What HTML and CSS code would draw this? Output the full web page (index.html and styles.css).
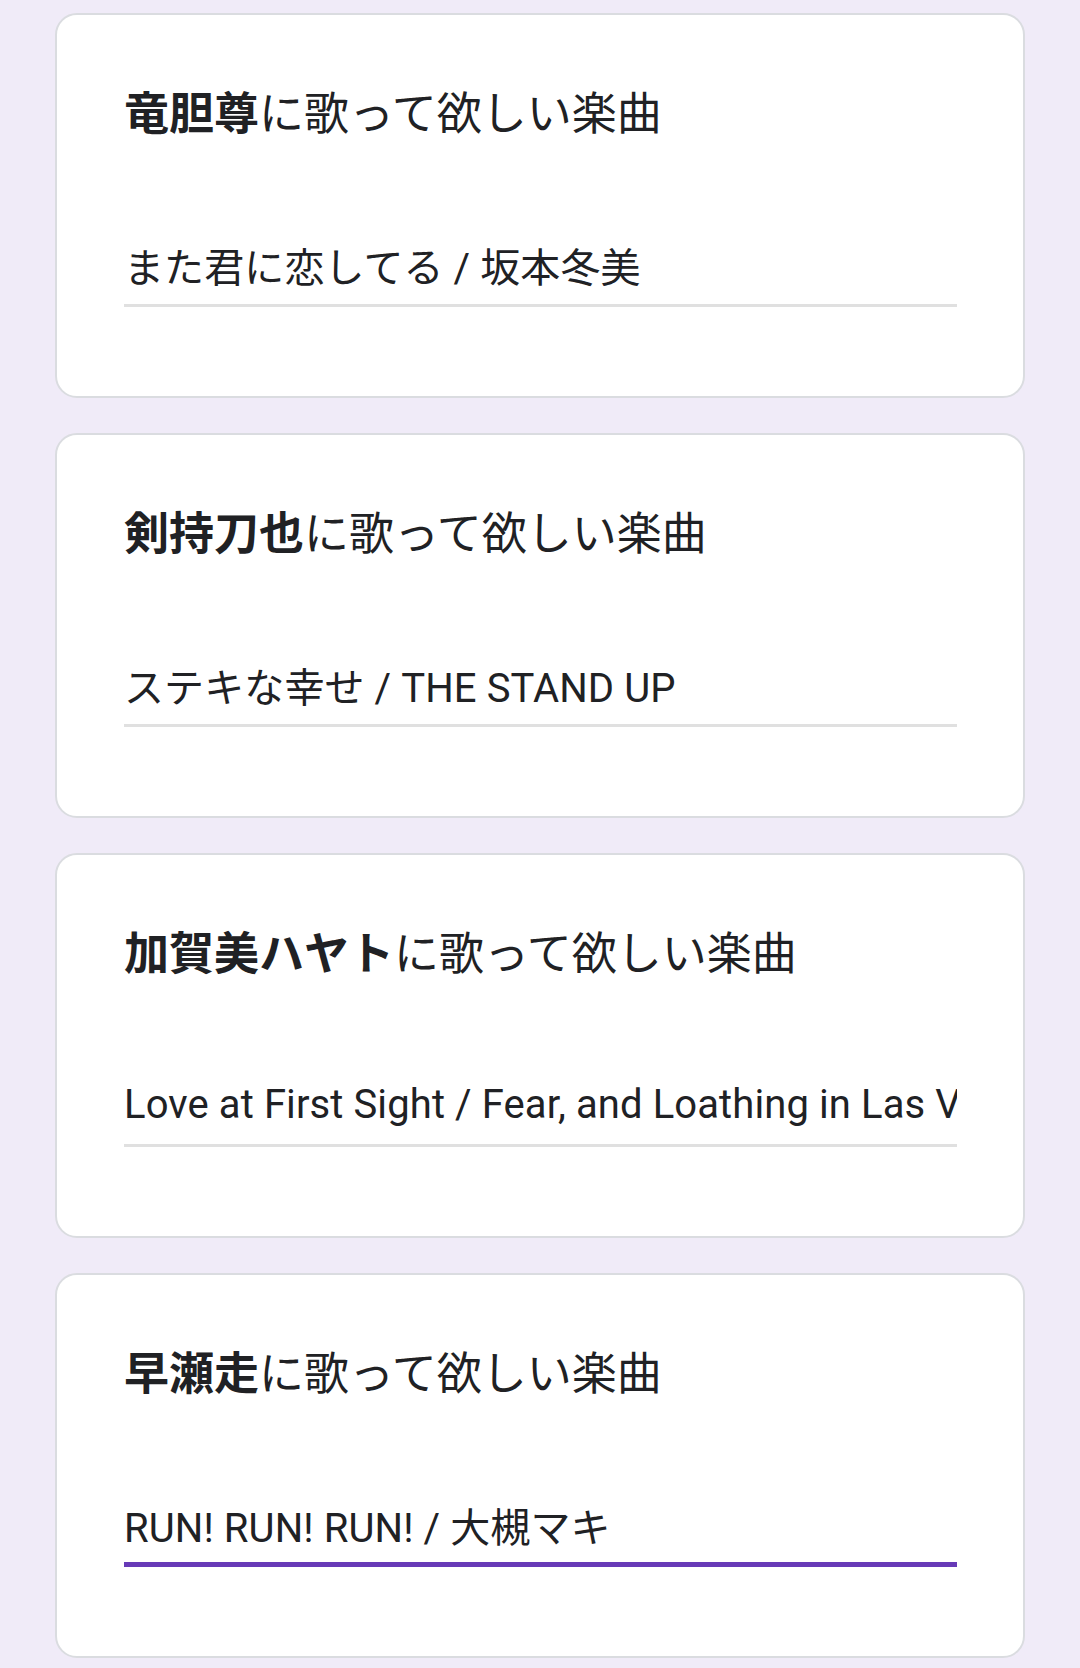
FILE: index.html
```html
<!DOCTYPE html>
<html lang="ja">
<head>
    <meta charset="UTF-8">
    <meta name="viewport" content="width=device-width, initial-scale=1.0">
    <title>歌って欲しい楽曲</title>
    <link rel="stylesheet" href="styles.css">
</head>
<body>

    <div class="container">
        <div class="card">
            <div class="question"><b>竜胆尊</b>に歌って欲しい楽曲</div>
            <div class="field">
                <input type="text" class="answer" value="また君に恋してる / 坂本冬美">
            </div>
        </div>

        <div class="card">
            <div class="question"><b>剣持刀也</b>に歌って欲しい楽曲</div>
            <div class="field">
                <input type="text" class="answer" value="ステキな幸せ / THE STAND UP">
            </div>
        </div>

        <div class="card">
            <div class="question"><b>加賀美ハヤト</b>に歌って欲しい楽曲</div>
            <div class="field">
                <input type="text" class="answer" value="Love at First Sight / Fear, and Loathing in Las Vegas">
            </div>
        </div>

        <div class="card">
            <div class="question"><b>早瀬走</b>に歌って欲しい楽曲</div>
            <div class="field focused">
                <input type="text" class="answer" value="RUN! RUN! RUN! / 大槻マキ">
            </div>
        </div>
    </div>

</body>
</html>
```

FILE: styles.css
```css
body {
    margin: 0;
    background-color: #f0ebf8;
    font-family: Roboto, "Noto Sans CJK JP", sans-serif;
    color: #202124;
}
.container {
    display: flex;
    flex-direction: column;
    gap: 35px;
    padding: 13px 55px;
}
.card {
    background: white;
    border: 2px solid #dadce0;
    border-radius: 22px;
    padding: 68px 66px 0 67px;
    height: 313px;
}
.question {
    font-size: 45px;
    line-height: 64px;
    white-space: nowrap;
}
.question b {
    font-weight: 700;
}
.field {
    margin-top: 88px;
}
.answer {
    display: block;
    width: 100%;
    box-sizing: border-box;
    height: 72px;
    padding: 0 0 10px 0;
    margin: 0;
    border: none;
    border-bottom: 3px solid #e0e0e0;
    font-family: Roboto, "Noto Sans CJK JP", sans-serif;
    font-size: 40px;
    letter-spacing: 0.1px;
    line-height: 56px;
    color: #202124;
    background: transparent;
    outline: none;
}
.field.focused .answer {
    border-bottom: 5px solid #673ab7;
    padding-bottom: 8px;
}
```
